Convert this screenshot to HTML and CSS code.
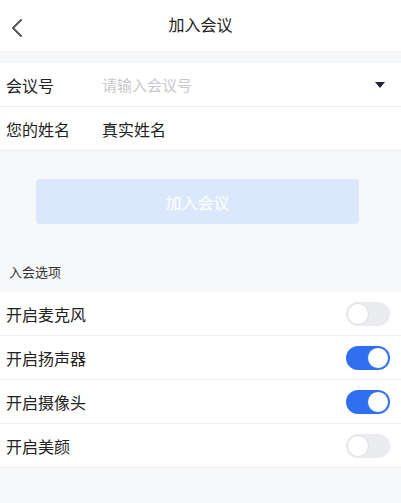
FILE: index.html
```html
<!DOCTYPE html>
<html lang="zh-CN">

<head>
  <link rel="stylesheet" href="styles.css">
  <meta charset="UTF-8">
  <meta name="viewport" content="width=device-width, initial-scale=1.0">
  <title>加入会议</title>
</head>

<body>
  <header class="nav">
    <svg class="nav-back" width="12" height="20" viewBox="0 0 12 20">
      <path d="M10 2 L2 10 L10 18" fill="none" stroke="#555" stroke-width="2" stroke-linecap="round" stroke-linejoin="round" />
    </svg>
    <div class="nav-title">加入会议</div>
  </header>

  <section class="form">
    <div class="form-row">
      <span class="form-label">会议号</span>
      <span class="form-input placeholder">请输入会议号</span>
      <span class="caret"></span>
    </div>
    <div class="form-row">
      <span class="form-label">您的姓名</span>
      <span class="form-input">真实姓名</span>
    </div>
  </section>

  <div class="join">
    <button class="join-btn" disabled>加入会议</button>
  </div>

  <div class="section-title">入会选项</div>

  <section class="options">
    <div class="option">
      <span>开启麦克风</span>
      <span class="switch"></span>
    </div>
    <div class="option">
      <span>开启扬声器</span>
      <span class="switch on"></span>
    </div>
    <div class="option">
      <span>开启摄像头</span>
      <span class="switch on"></span>
    </div>
    <div class="option">
      <span>开启美颜</span>
      <span class="switch"></span>
    </div>
  </section>
</body>

</html>
```

FILE: styles.css
```css
body {
  margin: 0;
  background: #f7f8fa;
  font-family: "Noto Sans CJK SC", "Noto Sans", sans-serif;
  color: #222;
}

.nav {
  height: 51px;
  background: #fff;
  display: flex;
  align-items: center;
  justify-content: center;
  position: relative;
}

.nav-back {
  position: absolute;
  left: 11px;
  top: 18px;
}

.nav-title {
  font-size: 16px;
  color: #222;
  margin-top: -4px;
}

.form {
  margin-top: 12px;
  background: #fff;
}

.form-row {
  height: 43px;
  display: flex;
  align-items: center;
  padding: 0 16px 0 6px;
  border-bottom: 1px solid #eee;
  font-size: 16px;
  line-height: 1;
}

.form-label {
  width: 96px;
}

.form-input {
  flex: 1;
}

.placeholder {
  color: #c8c8cc;
  font-size: 15px;
}

.caret {
  width: 0;
  height: 0;
  border-left: 5px solid transparent;
  border-right: 5px solid transparent;
  border-top: 6px solid #1f2340;
}

.join {
  padding: 28px 42px 0 36px;
}

.join-btn {
  display: block;
  width: 100%;
  height: 45px;
  border: none;
  border-radius: 4px;
  background: #dbe8fb;
  color: #fff;
  font-family: inherit;
  font-size: 16px;
}

.section-title {
  font-size: 13px;
  color: #333;
  padding: 38px 0 0 9px;
  height: 30px;
}

.options {
  background: #fff;
}

.option {
  height: 43px;
  display: flex;
  align-items: center;
  justify-content: space-between;
  padding: 0 11px 0 6px;
  border-bottom: 1px solid #eee;
  font-size: 16px;
  line-height: 1;
}

.switch {
  width: 44px;
  height: 24px;
  border-radius: 12px;
  background: #ebecef;
  position: relative;
}

.switch::after {
  content: "";
  position: absolute;
  top: 1px;
  left: 1px;
  width: 20px;
  height: 20px;
  border-radius: 50%;
  background: #fff;
  border: 1px solid #e0e0e3;
}

.switch.on {
  background: #2f6ff0;
}

.switch.on::after {
  left: 21px;
  border-color: #2f6ff0;
}
```
